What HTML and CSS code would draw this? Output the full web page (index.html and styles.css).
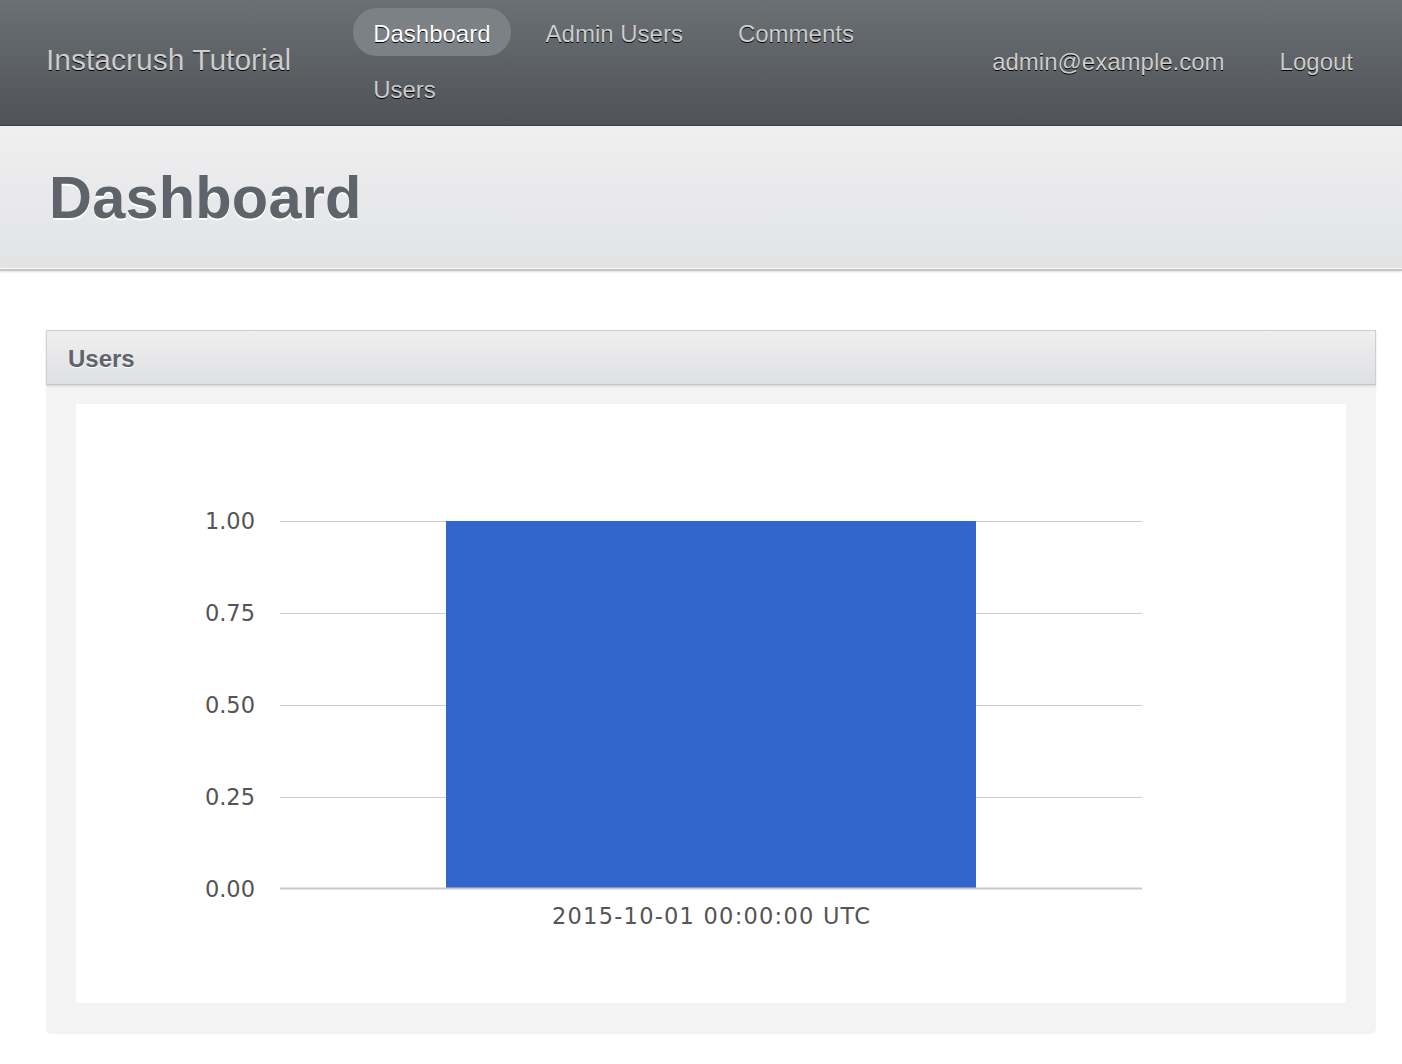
FILE: index.html
```html
<!DOCTYPE html>
<html>
<head>
<meta charset="utf-8">
<title>Dashboard | Instacrush Tutorial</title>
<link rel="stylesheet" href="styles.css">
</head>
<body>
<div class="header">
  <h1 class="site-title">Instacrush Tutorial</h1>
  <ul class="tabs">
    <li class="tab current"><a href="#">Dashboard</a></li>
    <li class="tab"><a href="#">Admin Users</a></li>
    <li class="tab"><a href="#">Comments</a></li>
    <li class="tab"><a href="#">Users</a></li>
  </ul>
  <ul class="utility-nav">
    <li class="tab"><a href="#">admin@example.com</a></li>
    <li class="tab"><a href="#">Logout</a></li>
  </ul>
</div>
<div class="title-bar">
  <h2 class="page-title">Dashboard</h2>
</div>
<div class="main">
  <div class="panel">
    <h3 class="panel-head">Users</h3>
    <div class="panel-body">
      <div class="chart">
        <svg class="chart-svg" width="1270" height="599" viewBox="0 0 1270 599">
          <g class="grid">
            <line x1="204" y1="117.5" x2="1066" y2="117.5"/>
            <line x1="204" y1="209.5" x2="1066" y2="209.5"/>
            <line x1="204" y1="301.5" x2="1066" y2="301.5"/>
            <line x1="204" y1="393.5" x2="1066" y2="393.5"/>
          </g>
          <rect class="bar" x="370" y="117" width="530" height="367"/>
          <line class="baseline" x1="204" y1="484.5" x2="1066" y2="484.5"/>
          <g class="labels">
            <text x="179" y="125" text-anchor="end">1.00</text>
            <text x="179" y="217" text-anchor="end">0.75</text>
            <text x="179" y="309" text-anchor="end">0.50</text>
            <text x="179" y="401" text-anchor="end">0.25</text>
            <text x="179" y="493" text-anchor="end">0.00</text>
            <text x="476" y="520" textLength="318" lengthAdjust="spacing">2015-10-01 00:00:00 UTC</text>
          </g>
        </svg>
      </div>
    </div>
  </div>
</div>
</body>
</html>
```

FILE: styles.css
```css
* { box-sizing: border-box; }
html, body { margin: 0; padding: 0; background: #fff; }
body { font-family: "Liberation Sans", Arial, Helvetica, sans-serif; color: #323537; }
ul { list-style: none; margin: 0; padding: 0; }
a { text-decoration: none; color: inherit; }

.header {
  display: flex;
  align-items: center;
  height: 126px;
  padding: 0 29px 0 46px;
  background: linear-gradient(to bottom, #6b7075 0%, #4f5357 100%);
  border-bottom: 1px solid #3e4245;
}
.site-title {
  margin: -6px 62px 0 0;
  font-size: 30px;
  font-weight: normal;
  color: #cdcdcd;
  text-shadow: 0 1px 0 #000;
  white-space: nowrap;
}
.tabs {
  display: flex;
  flex-wrap: wrap;
  gap: 8px 15px;
  width: 540px;
  align-self: flex-start;
  margin-top: 8px;
}
.tab a {
  display: block;
  height: 48px;
  line-height: 44px;
  padding: 4px 20px 0;
  border-radius: 24px;
  font-size: 24px;
  color: #cdcdcd;
  text-shadow: 0 1px 0 #000;
  white-space: nowrap;
}
.tab.current a {
  background: #7c8186;
  color: #fff;
}
.utility-nav {
  display: flex;
  gap: 15px;
  margin: -6px 0 0 auto;
}

.title-bar {
  height: 145px;
  padding: 0 49px;
  display: flex;
  align-items: center;
  background: linear-gradient(to bottom, #efeff0 0%, #e2e3e5 100%);
  border-bottom: 2px solid #c6c6c6;
  box-shadow: inset 0 -1px 0 #f7f7f7, 0 1px 2px rgba(0,0,0,0.12);
}
.page-title {
  margin: 0;
  font-size: 59.5px;
  font-weight: bold;
  color: #5e6469;
  text-shadow: 0 2px 0 #fff;
  letter-spacing: 0.2px;
}

.main { padding: 59px 26px 30px 46px; }
.panel {
  background: #f3f3f3;
  border-radius: 6px;
  box-shadow: 0 1px 1px rgba(0,0,0,0.06);
}
.panel-head {
  margin: 0;
  height: 55px;
  line-height: 55px;
  padding: 0 21px;
  font-size: 24px;
  font-weight: bold;
  color: #5e6469;
  text-shadow: 0 1px 0 #fff;
  background: linear-gradient(to bottom, #efeff0 0%, #dfe0e2 100%);
  border: 1px solid #cfcfcf;
  border-bottom-color: #c4c4c4;
  box-shadow: 0 1px 2px rgba(0,0,0,0.12);
}
.panel-body { padding: 19px 30px 30px; }
.chart { background: #fff; height: 599px; }
.chart-svg { display: block; }
.grid line, .baseline { stroke: #cccccc; stroke-width: 1; }
.baseline { stroke: #c8c8cf; stroke-width: 2; }
.bar { fill: #3366cc; }
.labels text {
  font-family: "DejaVu Sans", Verdana, sans-serif;
  font-size: 22.5px;
  fill: #555;
}
```
